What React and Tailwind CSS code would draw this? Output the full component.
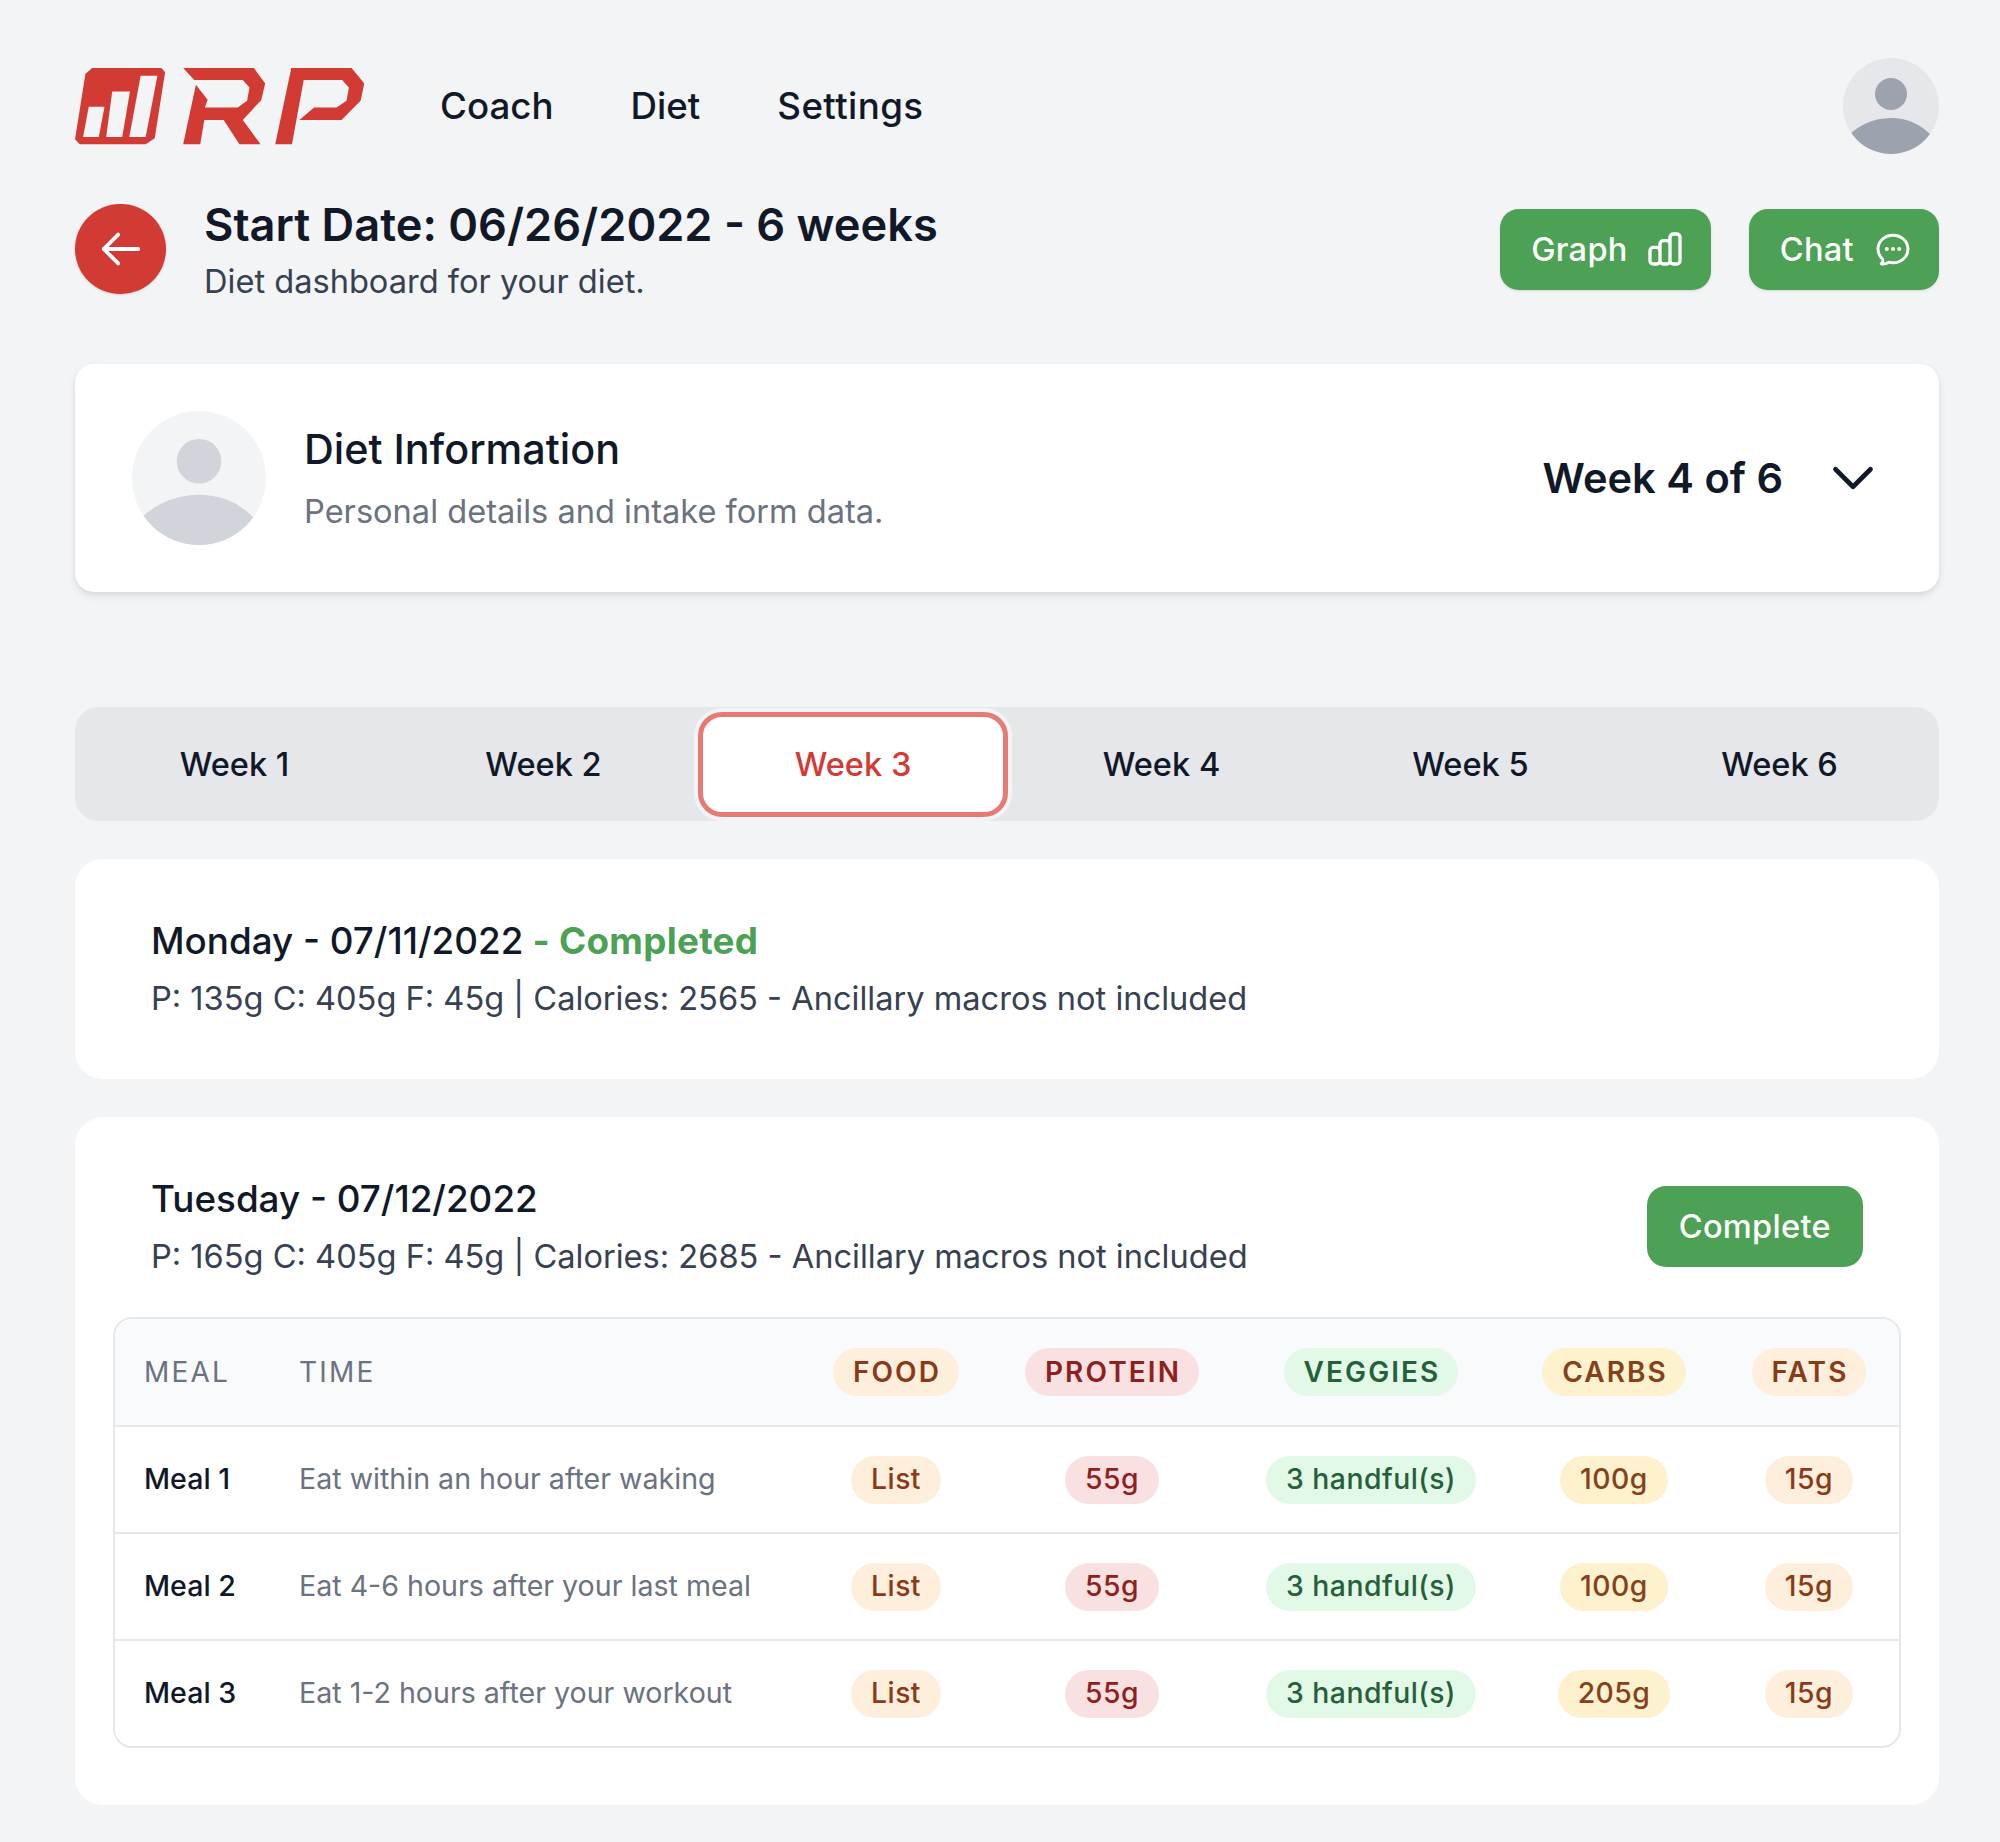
import { Fragment } from 'react'

const tabs = ['Week 1', 'Week 2', 'Week 3', 'Week 4', 'Week 5', 'Week 6']

const headPills = {
  food: 'bg-[#feefdc] text-[#8a3a17]',
  protein: 'bg-[#f9e1e1] text-[#8f2020]',
  veggies: 'bg-[#e2f9e8] text-[#25603a]',
  carbs: 'bg-[#fdf2cd] text-[#86411a]',
  fats: 'bg-[#feefdc] text-[#8a3a17]',
}

const meals = [
  { name: 'Meal 1', time: 'Eat within an hour after waking', carbs: '100g' },
  { name: 'Meal 2', time: 'Eat 4-6 hours after your last meal', carbs: '100g' },
  { name: 'Meal 3', time: 'Eat 1-2 hours after your workout', carbs: '205g' },
]

const gridCols = 'grid grid-cols-[155px_531px_190px_242px_276px_210px_1fr] items-center'

function Logo() {
  return (
    <svg viewBox="44 52 866 230" className="h-[77px] w-[290px]" fill="#d23a34">
      <path
        fillRule="evenodd"
        d="M95 52H302L313 65L282 262L255 280H58L44 265L75 70ZM85 168L68 258H115L132 168ZM155 122L137 258H185L208 122ZM240 75L206 258H255L290 75Z"
      />
      <path d="M367 52H578L612 98L600 148L545 207L598 280H535L488 207H430L418 280H367L405 102L440 147L432 170H530L558 150L565 110L545 88H400Z" />
      <path d="M690 52H870L908 98L897 150L840 207H714L758 170H825L855 150L862 110L842 88H727L692 280H642Z" />
    </svg>
  )
}

function Avatar({ className, fg, bg }) {
  return (
    <span className={`block overflow-hidden rounded-full ${bg} ${className}`}>
      <svg viewBox="0 0 24 24" fill="currentColor" className={`h-full w-full ${fg}`}>
        <path d="M24 20.993V24H0v-2.996A14.977 14.977 0 0112.004 15c4.904 0 9.26 2.354 11.996 6.993zM16.002 8.999a4 4 0 11-8 0 4 4 0 018 0z" />
      </svg>
    </span>
  )
}

function GreenButton({ label, children, className }) {
  return (
    <button className={`flex h-[81px] items-center rounded-[19px] bg-[#4ca154] pl-[31px] pr-[26px] text-[32.6px] font-medium tracking-[0.3px] text-white shadow-sm ${className}`}>
      {label}
      {children}
    </button>
  )
}

function Pill({ tone, wide, children }) {
  return (
    <span
      className={`inline-flex h-[48px] items-center rounded-full ${wide ? 'pl-[20px] pr-[18px] text-[28px] font-semibold uppercase tracking-[2.1px]' : 'px-[20px] text-[28.3px] font-medium tracking-[0.5px]'} ${headPills[tone]}`}
    >
      {children}
    </span>
  )
}

function Cell({ children }) {
  return <div className="flex justify-center">{children}</div>
}

function DayHeading({ day, done }) {
  return (
    <p className="text-[36.8px] font-medium leading-[56px] text-[#111827]">
      {day}
      {done ? <span className="font-bold tracking-[0.3px] text-[#4ca154]"> - Completed</span> : null}
    </p>
  )
}

export default function App() {
  return (
    <div className="min-h-[1842px] bg-[#f3f4f6] pl-[75px] pr-[61px] pt-[58px] font-['Inter',sans-serif] text-[#111827]">
      {/* top nav */}
      <header className="flex h-[96px] items-center justify-between">
        <div className="flex items-center">
          <Logo />
          <nav className="ml-[75px] flex gap-[77px] text-[36.7px] font-medium">
            <span>Coach</span>
            <span>Diet</span>
            <span className="tracking-[0.4px]">Settings</span>
          </nav>
        </div>
        <Avatar className="h-[96px] w-[96px]" bg="bg-[#e5e7eb]" fg="text-[#9ca3af]" />
      </header>

      {/* page title */}
      <div className="mt-[50px] flex h-[90px] items-center justify-between">
        <div className="flex items-center gap-[38px]">
          <span className="grid h-[90px] w-[91px] place-items-center rounded-full bg-[#d23a34] text-white shadow-sm">
            <svg viewBox="0 0 24 24" fill="none" stroke="currentColor" strokeWidth="2" className="h-[46px] w-[46px]">
              <path strokeLinecap="round" strokeLinejoin="round" d="M10.5 19.5L3 12m0 0l7.5-7.5M3 12h18" />
            </svg>
          </span>
          <div className="mt-[3px]">
            <h1 className="text-[45.2px] font-semibold leading-[56px]">Start Date: 06/26/2022 - 6 weeks</h1>
            <p className="mt-[5px] text-[32.6px] leading-[46px] text-[#374151]">Diet dashboard for your diet.</p>
          </div>
        </div>
        <div className="flex gap-[38px]">
          <GreenButton label="Graph" className="gap-[17px]">
            <svg viewBox="0 0 24 24" fill="none" stroke="currentColor" strokeWidth="2" className="h-[40px] w-[40px]">
              <path strokeLinecap="round" strokeLinejoin="round" d="M9 19v-6a2 2 0 00-2-2H5a2 2 0 00-2 2v6a2 2 0 002 2h2a2 2 0 002-2zm0 0V9a2 2 0 012-2h2a2 2 0 012 2v10m-6 0a2 2 0 002 2h2a2 2 0 002-2m0 0V5a2 2 0 012-2h2a2 2 0 012 2v14a2 2 0 01-2 2h-2a2 2 0 01-2-2z" />
            </svg>
          </GreenButton>
          <GreenButton label="Chat" className="gap-[19px]">
            <svg viewBox="0 0 24 24" fill="none" stroke="currentColor" strokeWidth="1.75" className="h-[40px] w-[40px]">
              <path strokeLinecap="round" strokeLinejoin="round" d="M8.625 12a.375.375 0 11-.75 0 .375.375 0 01.75 0zm0 0H8.25m4.125 0a.375.375 0 11-.75 0 .375.375 0 01.75 0zm0 0H12m4.125 0a.375.375 0 11-.75 0 .375.375 0 01.75 0zm0 0h-.375M21 12c0 4.556-4.03 8.25-9 8.25a9.764 9.764 0 01-2.555-.337A5.972 5.972 0 015.41 20.97a5.969 5.969 0 01-.474-.065 4.48 4.48 0 00.978-2.025c.09-.457-.133-.901-.467-1.226C3.93 16.178 3 14.189 3 12c0-4.556 4.03-8.25 9-8.25s9 3.694 9 8.25z" />
            </svg>
          </GreenButton>
        </div>
      </div>

      {/* diet information */}
      <section className="mt-[70px] flex h-[228px] items-center justify-between rounded-[19px] bg-white pl-[57px] pr-[58px] shadow-[0_4px_8px_rgba(0,0,0,0.08),0_2px_4px_rgba(0,0,0,0.05)]">
        <div className="flex items-center gap-[38px]">
          <Avatar className="h-[134px] w-[134px]" bg="bg-[#f3f4f6]" fg="text-[#d1d5db]" />
          <div className="pb-[4px]">
            <h2 className="text-[41.3px] font-medium leading-[60px]">Diet Information</h2>
            <p className="mt-[9px] text-[32.6px] leading-[46px] text-[#6b7280]">Personal details and intake form data.</p>
          </div>
        </div>
        <div className="flex items-center gap-[42px]">
          <span className="text-[41.6px] font-semibold">Week 4 of 6</span>
          <svg viewBox="0 0 24 24" fill="none" stroke="currentColor" strokeWidth="2" className="h-[56px] w-[56px]">
            <path strokeLinecap="round" strokeLinejoin="round" d="M19.5 8.25l-7.5 7.5-7.5-7.5" />
          </svg>
        </div>
      </section>

      {/* week tabs */}
      <div className="mt-[115px] grid h-[114px] grid-cols-6 items-center rounded-[24px] bg-[#e5e7eb] px-[5px]">
        {tabs.map((t) =>
          t === 'Week 3' ? (
            <span
              key={t}
              className="mx-auto flex h-[105px] w-[310px] items-center justify-center rounded-[24px] border-[5px] border-[#e87a74] bg-white text-[32.6px] font-medium text-[#d23a34] ring-[4px] ring-[#f3f4f6]"
            >
              {t}
            </span>
          ) : (
            <span key={t} className="text-center text-[32.6px] font-medium">
              {t}
            </span>
          ),
        )}
      </div>

      {/* monday */}
      <section className="mt-[38px] h-[220px] rounded-[28px] bg-white px-[76px] pt-[54px]">
        <DayHeading day="Monday - 07/11/2022" done />
        <p className="mt-[1px] text-[32.6px] leading-[56px] text-[#374151]">
          P: 135g C: 405g F: 45g | Calories: 2565 - Ancillary macros not included
        </p>
      </section>

      {/* tuesday */}
      <section className="mt-[38px] rounded-[28px] bg-white px-[38px] pb-[57px] pt-[54px]">
        <div className="flex items-center justify-between px-[38px]">
          <div>
            <DayHeading day="Tuesday - 07/12/2022" />
            <p className="mt-[1px] text-[32.6px] leading-[56px] text-[#374151]">
              P: 165g C: 405g F: 45g | Calories: 2685 - Ancillary macros not included
            </p>
          </div>
          <button className="-mt-[3px] h-[81px] rounded-[19px] bg-[#4ca154] px-[32px] text-[32.6px] font-medium tracking-[0.3px] text-white">
            Complete
          </button>
        </div>

        <div className="mt-[33px] overflow-hidden rounded-[19px] border-2 border-[#e5e7eb]">
          <div className={`${gridCols} h-[106px] bg-[#f9fafb] text-[28px] uppercase tracking-[2.2px] text-[#6b7280]`}>
            <span className="pl-[29px]">Meal</span>
            <span className="pl-[29px]">Time</span>
            <Cell><Pill tone="food" wide>Food</Pill></Cell>
            <Cell><Pill tone="protein" wide>Protein</Pill></Cell>
            <Cell><Pill tone="veggies" wide>Veggies</Pill></Cell>
            <Cell><Pill tone="carbs" wide>Carbs</Pill></Cell>
            <Cell><Pill tone="fats" wide>Fats</Pill></Cell>
          </div>
          {meals.map((m) => (
            <Fragment key={m.name}>
              <div className={`${gridCols} h-[107px] border-t-2 border-[#e5e7eb] text-[28.6px]`}>
                <span className="pl-[29px] font-medium">{m.name}</span>
                <span className="pl-[29px] text-[#6b7280]">{m.time}</span>
                <Cell><Pill tone="food">List</Pill></Cell>
                <Cell><Pill tone="protein">55g</Pill></Cell>
                <Cell><Pill tone="veggies">3 handful(s)</Pill></Cell>
                <Cell><Pill tone="carbs">{m.carbs}</Pill></Cell>
                <Cell><Pill tone="fats">15g</Pill></Cell>
              </div>
            </Fragment>
          ))}
        </div>
      </section>
    </div>
  )
}
